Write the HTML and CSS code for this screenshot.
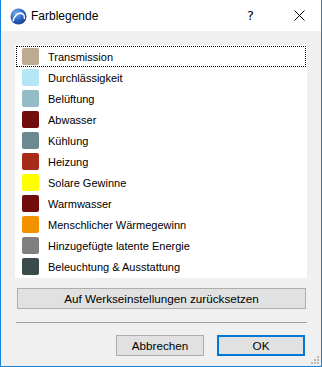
FILE: index.html
```html
<!DOCTYPE html>
<html lang="de">
<head>
    <meta charset="UTF-8">
    <title>Farblegende</title>
    <link rel="stylesheet" href="styles.css">
</head>
<body>
    <div class="window">
        <header class="titlebar">
            <svg class="app-icon" width="17" height="17" viewBox="0 0 17 17">
                <defs>
                    <radialGradient id="g" cx="35%" cy="30%" r="75%">
                        <stop offset="0" stop-color="#7fb0ec"/>
                        <stop offset="0.6" stop-color="#2a63c4"/>
                        <stop offset="1" stop-color="#1c3f8f"/>
                    </radialGradient>
                </defs>
                <circle cx="8.5" cy="8.5" r="8" fill="url(#g)"/>
                <path d="M3 13 C5 6 10 3 14 7" stroke="#fff" stroke-width="1.6" fill="none"/>
                <path d="M14 7 L14.5 11" stroke="#fff" stroke-width="1.4" fill="none"/>
            </svg>
            <span class="title">Farblegende</span>
            <span class="help">?</span>
            <svg class="close" width="11" height="11" viewBox="0 0 11 11">
                <path d="M0.5 0.5 L10.5 10.5 M10.5 0.5 L0.5 10.5" stroke="#000" stroke-width="1"/>
            </svg>
        </header>
        <main class="content">
            <ul class="legend">
                <li class="row focused"><span class="swatch" style="background:#bcab90"></span>Transmission</li>
                <li class="row"><span class="swatch" style="background:#b5e6f6"></span>Durchlässigkeit</li>
                <li class="row"><span class="swatch" style="background:#93bcc7"></span>Belüftung</li>
                <li class="row"><span class="swatch" style="background:#730c0c"></span>Abwasser</li>
                <li class="row"><span class="swatch" style="background:#6a8990"></span>Kühlung</li>
                <li class="row"><span class="swatch" style="background:#a82a19"></span>Heizung</li>
                <li class="row"><span class="swatch" style="background:#ffff00"></span>Solare Gewinne</li>
                <li class="row"><span class="swatch" style="background:#730c0c"></span>Warmwasser</li>
                <li class="row"><span class="swatch" style="background:#f39200"></span>Menschlicher Wärmegewinn</li>
                <li class="row"><span class="swatch" style="background:#808080"></span>Hinzugefügte latente Energie</li>
                <li class="row"><span class="swatch" style="background:#3b4b4b"></span>Beleuchtung &amp; Ausstattung</li>
            </ul>
            <button class="btn wide" type="button">Auf Werkseinstellungen zurücksetzen</button>
            <hr class="sep">
            <div class="actions">
                <button class="btn" type="button">Abbrechen</button>
                <button class="btn default" type="button">OK</button>
            </div>
            <svg class="grip" width="9" height="9" viewBox="0 0 9 9">
                <rect x="6" y="0" width="2" height="2" fill="#b8b8b8"/>
                <rect x="3" y="3" width="2" height="2" fill="#b8b8b8"/>
                <rect x="6" y="3" width="2" height="2" fill="#b8b8b8"/>
                <rect x="0" y="6" width="2" height="2" fill="#b8b8b8"/>
                <rect x="3" y="6" width="2" height="2" fill="#b8b8b8"/>
                <rect x="6" y="6" width="2" height="2" fill="#b8b8b8"/>
            </svg>
        </main>
    </div>
</body>
</html>
```

FILE: styles.css
```css
body {
    margin: 0;
    font-family: "Liberation Sans", Arial, sans-serif;
    font-size: 11px;
    color: #000;
}
.window {
    width: 322px;
    height: 367px;
    box-sizing: border-box;
    border: 1px solid #1883d7;
    border-top: none;
    display: flex;
    flex-direction: column;
    background: #f0f0f0;
}
.titlebar {
    height: 31px;
    background: #fff;
    display: flex;
    align-items: center;
    padding-left: 9px;
}
.app-icon {
    margin-top: 1px;
}
.title {
    font-size: 12px;
    margin-left: 4px;
    flex: 1;
}
.help {
    font-family: "DejaVu Sans", sans-serif;
    font-size: 13px;
    margin-right: 40px;
}
.close {
    margin-right: 16px;
}
.content {
    flex: 1;
    padding: 14px 14px 0 14px;
    display: flex;
    flex-direction: column;
    position: relative;
}
.legend {
    list-style: none;
    margin: 0;
    padding: 1px;
    background: #fff;
}
.row {
    height: 21px;
    box-sizing: border-box;
    display: flex;
    align-items: center;
    padding-left: 6px;
    border: 1px solid transparent;
}
.row.focused {
    border: 1px dotted #000;
}
.swatch {
    width: 17px;
    height: 17px;
    border-radius: 2px;
    margin-right: 9px;
    margin-left: -1px;
}
.btn {
    font-family: "Liberation Sans", Arial, sans-serif;
    font-size: 11.7px;
    color: #000;
    background: #e1e1e1;
    border: 1px solid #adadad;
    height: 21px;
    padding: 0;
}
.wide {
    margin: 10px 1px 0 2px;
}
.sep {
    border: none;
    border-top: 1px solid #a0a0a0;
    margin: 13px 0 0 1px;
    height: 0;
}
.actions {
    display: flex;
    justify-content: flex-end;
    gap: 13px;
    margin-top: 12px;
    padding-right: 2px;
}
.actions .btn {
    width: 88px;
}
.default {
    border: 2px solid #0078d7;
    width: 87px;
}
.grip {
    position: absolute;
    right: 1px;
    bottom: 1px;
}
```
